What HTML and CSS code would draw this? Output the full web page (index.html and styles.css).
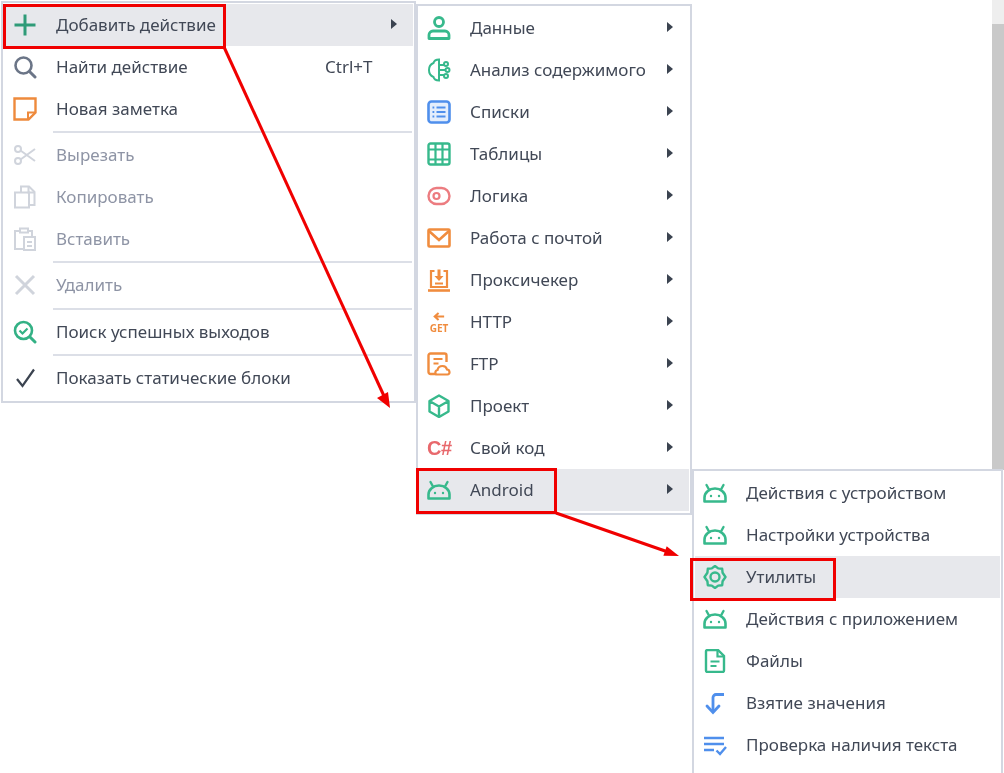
FILE: index.html
```html
<!DOCTYPE html>
<html lang="ru">
<head>
<meta charset="utf-8">
<title>Контекстное меню</title>
<link rel="stylesheet" href="styles.css">
</head>
<body>
<svg class="defs" width="0" height="0" aria-hidden="true">
  <defs>
    <symbol id="android" viewBox="0 0 24 24">
      <path d="M1.500 20.500v-4a10.500 9 0 0 1 21 0v4z" fill="none" stroke="currentColor" stroke-width="2.600" stroke-linejoin="round"/>
      <path d="M6 8.500L3.500 4M18 8.500L20.500 4" stroke="currentColor" stroke-width="2.400" stroke-linecap="round"/>
      <circle cx="8" cy="15" r="1.200" fill="currentColor"/>
      <circle cx="16" cy="15" r="1.200" fill="currentColor"/>
    </symbol>
  </defs>
</svg>

<div class="scrollbar"><div class="scroll-top"></div><div class="scroll-thumb"></div></div>

<div class="menu menu-main">
  <div class="item hover">
    <svg class="icon" viewBox="0 0 24 24"><path d="M12 1.500v21M1.500 12h21" stroke="#2f9b78" stroke-width="3"/></svg>
    <span class="label">Добавить действие</span><i class="caret"></i>
  </div>
  <div class="item">
    <svg class="icon" viewBox="0 0 24 24"><circle cx="10.500" cy="10.500" r="8" fill="none" stroke="#6b7587" stroke-width="2.600"/><path d="M16.500 16.500l5.500 5.500" stroke="#6b7587" stroke-width="3" stroke-linecap="round"/></svg>
    <span class="label">Найти действие</span><span class="shortcut">Ctrl+T</span>
  </div>
  <div class="item">
    <svg class="icon" viewBox="0 0 24 24"><path d="M1.500 1.500h21v14l-7 7h-14z" fill="none" stroke="#ee8a3c" stroke-width="2.400"/><path d="M22 15.500h-7v7" fill="none" stroke="#ee8a3c" stroke-width="2"/></svg>
    <span class="label">Новая заметка</span>
  </div>
  <div class="sep"></div>
  <div class="item off">
    <svg class="icon" viewBox="0 0 24 24"><g fill="none" stroke="#d0d4dc" stroke-width="2"><circle cx="5" cy="6" r="3"/><circle cx="5" cy="18" r="3"/><path d="M7.500 7.500L22 18M7.500 16.500L22 6"/></g></svg>
    <span class="label">Вырезать</span>
  </div>
  <div class="item off">
    <svg class="icon" viewBox="0 0 24 24"><g fill="none" stroke="#d0d4dc" stroke-width="2"><path d="M8 7V1.500h8l5.500 5.500v13H16"/><path d="M2 7.500h14v15H2z"/><path d="M15.500 2v5.500H21"/></g></svg>
    <span class="label">Копировать</span>
  </div>
  <div class="item off">
    <svg class="icon" viewBox="0 0 24 24"><g fill="none" stroke="#d0d4dc" stroke-width="2"><path d="M10 22H2V4h5M15 4h4v5"/><rect x="7" y="1.500" width="8" height="4"/><rect x="11" y="10" width="11" height="13"/><path d="M14 15h5M14 19h5"/></g></svg>
    <span class="label">Вставить</span>
  </div>
  <div class="sep"></div>
  <div class="item off">
    <svg class="icon" viewBox="0 0 24 24"><path d="M3 3l18 18M21 3L3 21" stroke="#d0d4dc" stroke-width="3"/></svg>
    <span class="label">Удалить</span>
  </div>
  <div class="sep sep-wide"></div>
  <div class="item">
    <svg class="icon" viewBox="0 0 24 24"><circle cx="10.500" cy="10.500" r="8.500" fill="none" stroke="#33b185" stroke-width="2.600"/><path d="M17 17l5 5" stroke="#33b185" stroke-width="3" stroke-linecap="round"/><path d="M6.500 10.500l3 3 5-5" fill="none" stroke="#33b185" stroke-width="2.200"/></svg>
    <span class="label">Поиск успешных выходов</span>
  </div>
  <div class="sep"></div>
  <div class="item">
    <svg class="icon" viewBox="0 0 24 24"><path d="M4 13l5.500 7L21 3.500" fill="none" stroke="#3b4350" stroke-width="2.200"/></svg>
    <span class="label">Показать статические блоки</span>
  </div>
</div>

<div class="menu menu-add">
  <div class="item">
    <svg class="icon" viewBox="0 0 24 24"><circle cx="12" cy="6" r="4.500" fill="none" stroke="#37b98c" stroke-width="2.800"/><path d="M2 22.500V19a4 4 0 0 1 4-4h12a4 4 0 0 1 4 4v3.500z" fill="none" stroke="#37b98c" stroke-width="2.800" stroke-linejoin="round"/></svg>
    <span class="label">Данные</span><i class="caret"></i>
  </div>
  <div class="item">
    <svg class="icon" viewBox="0 0 24 24"><g fill="none" stroke="#37b98c" stroke-width="2"><path d="M12 1.500C9 1.500 7 3 6.500 5 4 6 2 8.500 2 12s2 6 4.500 7c.5 2 2.500 3.500 5.500 3.500z"/><path d="M12 7h5M12 12h6M12 17h5"/><circle cx="19" cy="6" r="2"/><circle cx="20.500" cy="12" r="2"/><circle cx="19" cy="18" r="2"/></g></svg>
    <span class="label">Анализ содержимого</span><i class="caret"></i>
  </div>
  <div class="item">
    <svg class="icon" viewBox="0 0 24 24"><rect x="1.500" y="1.500" width="21" height="21" rx="3" fill="#e4eefc" stroke="#4f8fec" stroke-width="2.600"/><path d="M9.500 7.500h9M9.500 12h9M9.500 16.500h9M5.500 7.500h1.800M5.500 12h1.800M5.500 16.500h1.800" stroke="#4f8fec" stroke-width="2.200"/></svg>
    <span class="label">Списки</span><i class="caret"></i>
  </div>
  <div class="item">
    <svg class="icon" viewBox="0 0 24 24"><rect x="1.500" y="1.500" width="21" height="21" rx="2" fill="none" stroke="#37b98c" stroke-width="2.400"/><path d="M1.500 7.500h21M1.500 17.500h21M8.500 2v20M15.500 2v20" stroke="#37b98c" stroke-width="2.200"/></svg>
    <span class="label">Таблицы</span><i class="caret"></i>
  </div>
  <div class="item">
    <svg class="icon" viewBox="0 0 24 24"><rect x="1.500" y="4" width="21" height="16" rx="8" fill="none" stroke="#ec7c80" stroke-width="2.400"/><circle cx="9.500" cy="12" r="3" fill="none" stroke="#ec7c80" stroke-width="2.200"/></svg>
    <span class="label">Логика</span><i class="caret"></i>
  </div>
  <div class="item">
    <svg class="icon" viewBox="0 0 24 24"><rect x="1.500" y="3.500" width="21" height="17" rx="1" fill="none" stroke="#f08c3e" stroke-width="2.600"/><path d="M2 5l10 9 10-9" fill="none" stroke="#f08c3e" stroke-width="2.600"/></svg>
    <span class="label">Работа с почтой</span><i class="caret"></i>
  </div>
  <div class="item">
    <svg class="icon" viewBox="0 0 24 24"><g fill="none" stroke="#f08c3e" stroke-width="2.200"><path d="M7.500 3H4v16h16V3h-3.500"/><path d="M1 22.500h22" stroke-width="2.600"/></g><path d="M10.500 1.500h3V8h3L12 13 7.500 8h3z" fill="#f08c3e"/><path d="M8 15.500h8" stroke="#f08c3e" stroke-width="2"/></svg>
    <span class="label">Проксичекер</span><i class="caret"></i>
  </div>
  <div class="item">
    <span class="icon get"><svg class="get-arrow" viewBox="0 0 14 10"><path d="M13 5H2.500M6.500 1L2 5l4.500 4" fill="none" stroke="#f08c3e" stroke-width="2.400"/></svg><b class="get-text">GET</b></span>
    <span class="label">HTTP</span><i class="caret"></i>
  </div>
  <div class="item">
    <svg class="icon" viewBox="0 0 24 24"><path d="M9 22H3.500a2 2 0 0 1-2-2V3.500a2 2 0 0 1 2-2h14a2 2 0 0 1 2 2V10" fill="none" stroke="#f08c3e" stroke-width="2.400"/><path d="M6.500 7h9M6.500 11.500h5" stroke="#f08c3e" stroke-width="2.200"/><path d="M10 22.500c-2 0-2.500-4 .5-4.500.5-2.500 2.500-4 5-4s4 1.500 4.500 3.500c3 0 3.500 5 .5 5z" fill="none" stroke="#f08c3e" stroke-width="2.200"/></svg>
    <span class="label">FTP</span><i class="caret"></i>
  </div>
  <div class="item">
    <svg class="icon" viewBox="0 0 24 24"><path d="M12 1.500l9.500 5.500v10.500L12 23l-9.500-5.500V7zM2.500 7L12 12.500 21.500 7M12 12.500V23" fill="none" stroke="#37b98c" stroke-width="2.400" stroke-linejoin="round"/></svg>
    <span class="label">Проект</span><i class="caret"></i>
  </div>
  <div class="item">
    <span class="icon csharp">C#</span>
    <span class="label">Свой код</span><i class="caret"></i>
  </div>
  <div class="item hover">
    <svg class="icon android"><use href="#android"/></svg>
    <span class="label">Android</span><i class="caret"></i>
  </div>
</div>

<div class="menu menu-android">
  <div class="item">
    <svg class="icon android"><use href="#android"/></svg>
    <span class="label">Действия с устройством</span>
  </div>
  <div class="item">
    <svg class="icon android"><use href="#android"/></svg>
    <span class="label">Настройки устройства</span>
  </div>
  <div class="item hover">
    <svg class="icon" viewBox="0 0 24 24"><path d="M12 1l3.200 2.400 4 .4.400 4L22.500 12l-2.900 4.200-.4 4-4 .4L12 23l-3.200-2.400-4-.4-.4-4L1.500 12l2.900-4.200.4-4 4-.4z" fill="none" stroke="#37b98c" stroke-width="2.400" stroke-linejoin="round"/><circle cx="12" cy="12" r="4.500" fill="none" stroke="#37b98c" stroke-width="2.400"/></svg>
    <span class="label">Утилиты</span>
  </div>
  <div class="item">
    <svg class="icon android"><use href="#android"/></svg>
    <span class="label">Действия с приложением</span>
  </div>
  <div class="item">
    <svg class="icon" viewBox="0 0 24 24"><path d="M3 2.500a1.500 1.500 0 0 1 1.500-1.500H15l6 6v14.500a1.500 1.500 0 0 1-1.500 1.500h-15A1.500 1.500 0 0 1 3 21.500z" fill="none" stroke="#37b98c" stroke-width="2.400"/><path d="M14.500 1.500V7.500H21" fill="none" stroke="#37b98c" stroke-width="2.200"/><path d="M7.500 12.500h9M7.500 17h6" stroke="#37b98c" stroke-width="2.200"/></svg>
    <span class="label">Файлы</span>
  </div>
  <div class="item">
    <svg class="icon" viewBox="0 0 24 24"><path d="M21 3.500H13a3 3 0 0 0-3 3V20" fill="none" stroke="#4f8fec" stroke-width="2.800"/><path d="M4 15l6 6.500 6-6.500" fill="none" stroke="#4f8fec" stroke-width="2.800" stroke-linecap="round"/></svg>
    <span class="label">Взятие значения</span>
  </div>
  <div class="item">
    <svg class="icon" viewBox="0 0 24 24"><path d="M1 5h20M1 11h20M1 17h10" stroke="#4f8fec" stroke-width="2.400"/><path d="M13.500 17.500l3.500 3.500 6-7" fill="none" stroke="#4f8fec" stroke-width="2.400"/></svg>
    <span class="label">Проверка наличия текста</span>
  </div>
</div>

<svg class="arrows" viewBox="0 0 1004 773" width="1004" height="773">
  <path d="M224 47L384 396" stroke="#f00000" stroke-width="3"/>
  <path d="M390 408L377 398 388 392z" fill="#f00000"/>
  <path d="M556 513L668 552" stroke="#f00000" stroke-width="3"/>
  <path d="M679 556L663.400 555.700 666.700 546.300z" fill="#f00000"/>
</svg>
<div class="mark mark-add"></div>
<div class="mark mark-android"></div>
<div class="mark mark-utils"></div>
</body>
</html>
```
FILE: styles.css
```css
html, body {
  margin: 0;
  padding: 0;
  height: 100%;
  background: #fff;
  overflow: hidden;
}
body {
  position: relative;
  width: 1004px;
  height: 773px;
  font-family: "Noto Sans", "Open Sans", sans-serif;
  font-size: 17px;
  color: #414856;
}
.defs { position: absolute; }

.scrollbar {
  position: absolute;
  left: 992px;
  top: 0;
  width: 12px;
  height: 470px;
  display: flex;
  flex-direction: column;
}
.scroll-top { height: 24px; background: #eeeeee; }
.scroll-thumb { flex: 1; background: #c9c9c9; }

.menu {
  position: absolute;
  box-sizing: border-box;
  display: flex;
  flex-direction: column;
  background: #fff;
  border: 2px solid #d3d7e1;
  padding: 1px;
  filter: blur(0.3px);
}
.menu-main { left: 1px; top: 1px; width: 415px; height: 402px; }
.menu-add { left: 416px; top: 4px; width: 276px; height: 511px; }
.menu-android { left: 692px; top: 469px; width: 311px; height: 310px; }

.item {
  flex: none;
  height: 42px;
  display: flex;
  align-items: center;
  position: relative;
}
.item.hover { background: #e7e8ec; }
.item.off { color: #8e94a5; }

.icon {
  flex: none;
  width: 24px;
  height: 24px;
  margin-left: 8px;
  margin-right: 19px;
}
.menu-main .icon { margin-left: 9px; }
.android { color: #37b98c; }

.label { white-space: nowrap; margin-bottom: 2px; }
.shortcut { position: absolute; left: 321px; margin-bottom: 2px; }
.caret {
  position: absolute;
  right: 16px;
  margin-top: -2px;
  width: 0;
  height: 0;
  border-left: 6px solid #3b4350;
  border-top: 5px solid transparent;
  border-bottom: 5px solid transparent;
}
.sep {
  flex: none;
  height: 4px;
  margin-left: 49px;
  margin-right: 1px;
  display: flex;
  align-items: center;
}
.sep-wide { height: 5px; }
.sep::before {
  content: "";
  flex: 1;
  height: 2px;
  background: #dcdfe7;
}

.get {
  display: flex;
  flex-direction: column;
  align-items: center;
  justify-content: center;
  gap: 2px;
  height: 24px;
}
.get-arrow { width: 12px; height: 9px; }
.get-text {
  font-size: 10px;
  line-height: 10px;
  font-weight: 700;
  color: #f08c3e;
}
.csharp {
  font-family: "Liberation Sans", sans-serif;
  font-weight: 700;
  font-size: 20px;
  line-height: 24px;
  color: #e8686c;
  white-space: nowrap;
  letter-spacing: -0.5px;
}

.arrows {
  position: absolute;
  left: 0;
  top: 0;
  pointer-events: none;
}
.mark {
  position: absolute;
  box-sizing: border-box;
  border: 3px solid #f00000;
}
.mark-add { left: 3px; top: 4px; width: 223px; height: 45px; }
.mark-android { left: 416px; top: 468px; width: 141px; height: 46px; }
.mark-utils { left: 690px; top: 558px; width: 146px; height: 43px; }
```
